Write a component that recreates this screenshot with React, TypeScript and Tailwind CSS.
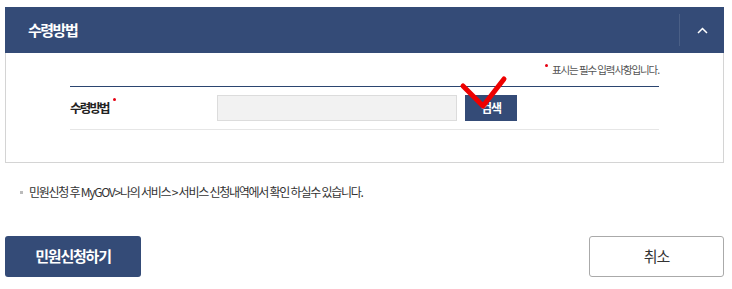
export default function App() {
  const font = { fontFamily: '"Noto Sans CJK KR", "Noto Sans", sans-serif' };

  return (
    <div className="relative w-[732px] h-[289px] bg-white pt-[7px] pl-[5px] pr-[8px]" style={font}>
      {/* 섹션 헤더 */}
      <div className="flex items-center h-[46px] bg-[#344b77]">
        <h2 className="pl-[23px] text-[15px] font-bold tracking-[-1.5px] text-white">수령방법</h2>
        <div className="ml-auto flex items-center h-full">
          <div className="w-px h-[32px] bg-[#4a5f86]" />
          <button className="w-[44px] h-full flex items-center justify-center">
            <svg width="11" height="7" viewBox="0 0 11 7" fill="none">
              <path d="M1 6 L5.5 1.5 L10 6" stroke="#ffffff" strokeWidth="1.5" />
            </svg>
          </button>
        </div>
      </div>

      {/* 입력 영역 */}
      <div className="border border-t-0 border-[#d4d4d4] px-[64px] pb-[32px]">
        <div className="flex items-center justify-end h-[33px] text-[10.5px] tracking-[-1.1px] text-[#555]">
          <span className="relative -top-[4px] mr-[4px] w-[3px] h-[3px] rounded-full bg-[#e60012]" />
          표시는 필수 입력사항입니다.
        </div>
        <div className="border-t border-[#2b4570]" />
        <div className="flex items-center h-[43px] border-b border-[#e6e6e6]">
          <div className="w-[147px] flex items-start">
            <span className="text-[12.5px] font-bold tracking-[-1.8px] text-[#222]">수령방법</span>
            <span className="ml-[4px] mt-[-1px] w-[3px] h-[3px] rounded-full bg-[#e60012]" />
          </div>
          <input
            className="w-[240px] h-[26px] bg-[#f2f2f2] border border-[#dcdcdc] outline-none"
            readOnly
          />
          <button className="ml-[8px] w-[52px] h-[26px] bg-[#344b77] text-white text-[12px] font-bold tracking-[-1px]">
            검색
          </button>
        </div>
      </div>

      {/* 안내 */}
      <div className="flex items-center mt-[20px] ml-[15px] text-[12px] tracking-[-1.25px] text-[#333]">
        <span className="w-[3px] h-[3px] bg-[#bbb] mr-[6px]" />
        민원신청 후 MyGOV&gt;나의 서비스 &gt; 서비스 신청내역에서 확인 하실수 있습니다.
      </div>

      {/* 버튼 */}
      <div className="flex justify-between mt-[35px]">
        <button className="w-[136px] h-[41px] rounded-[3px] bg-[#344b77] text-white text-[15px] font-bold tracking-[-1.2px]">
          민원신청하기
        </button>
        <button className="w-[135px] h-[41px] rounded-[3px] border border-[#aaa] bg-white text-[#333] text-[15px] tracking-[-1px]">
          취소
        </button>
      </div>

      {/* 체크 표시 */}
      <svg className="absolute left-0 top-0 pointer-events-none" width="732" height="289">
        <polyline
          points="463,86 483,106 504,79"
          fill="none"
          stroke="#ee0000"
          strokeWidth="5"
          strokeLinecap="round"
          strokeLinejoin="round"
        />
      </svg>
    </div>
  );
}
